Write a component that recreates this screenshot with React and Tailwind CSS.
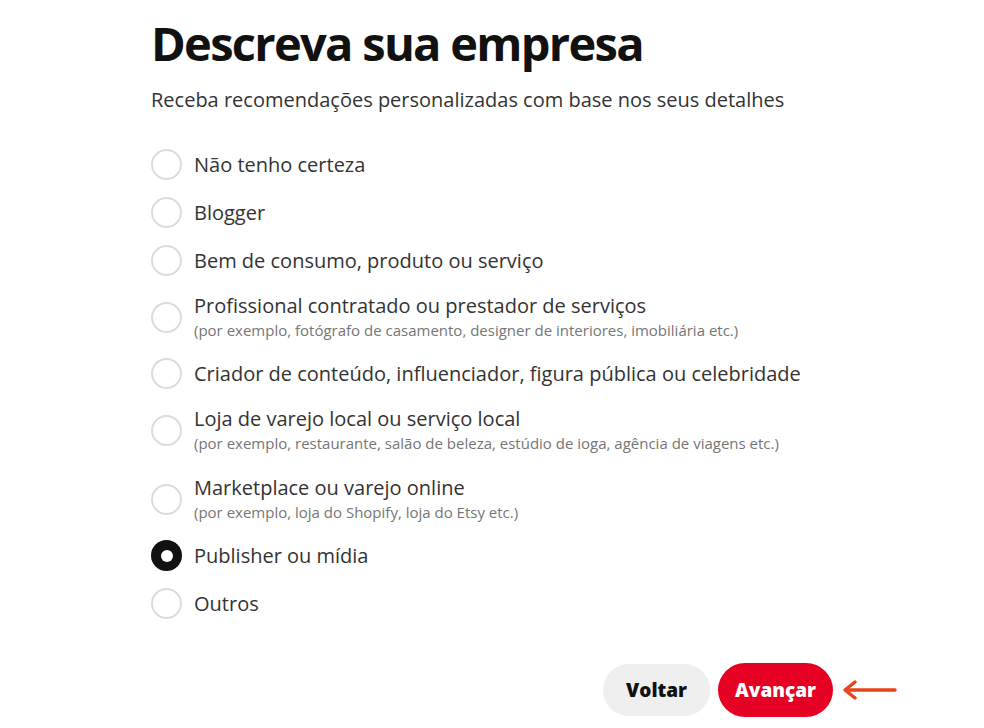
import React from "react";

const options = [
  { label: "Não tenho certeza" },
  { label: "Blogger" },
  { label: "Bem de consumo, produto ou serviço" },
  {
    label: "Profissional contratado ou prestador de serviços",
    hint: "(por exemplo, fotógrafo de casamento, designer de interiores, imobiliária etc.)",
  },
  { label: "Criador de conteúdo, influenciador, figura pública ou celebridade" },
  {
    label: "Loja de varejo local ou serviço local",
    hint: "(por exemplo, restaurante, salão de beleza, estúdio de ioga, agência de viagens etc.)",
  },
  {
    label: "Marketplace ou varejo online",
    hint: "(por exemplo, loja do Shopify, loja do Etsy etc.)",
    spaced: true,
  },
  { label: "Publisher ou mídia", selected: true },
  { label: "Outros" },
];

function Radio({ selected }) {
  return selected ? (
    <span className="flex h-[31px] w-[31px] shrink-0 items-center justify-center rounded-full bg-[#111111]">
      <span className="h-[12px] w-[12px] rounded-full bg-white" />
    </span>
  ) : (
    <span className="h-[31px] w-[31px] shrink-0 rounded-full border-2 border-[#dcdcdc] bg-white" />
  );
}

function Option({ label, hint, selected, spaced }) {
  return (
    <div className={spaced ? "mt-[4px] flex items-center gap-[12px]" : "flex items-center gap-[12px]"}>
      <Radio selected={selected} />
      <div className="flex flex-col">
        <span className="text-[20px] leading-[26px] text-[#333333]">{label}</span>
        {hint && <span className="text-[15px] leading-[22px] text-[#767676]">{hint}</span>}
      </div>
    </div>
  );
}

function ArrowLeft() {
  return (
    <svg width="56" height="24" viewBox="0 0 56 24" fill="none">
      <path d="M54 12H5" stroke="#e8441c" strokeWidth="3.5" strokeLinecap="round" />
      <path d="M14 4L4 12L14 20" stroke="#e8441c" strokeWidth="3.5" strokeLinecap="round" strokeLinejoin="round" />
    </svg>
  );
}

export default function App() {
  return (
    <div
      className="min-h-[728px] w-full bg-white pl-[151px] pr-[87px] pt-[15px]"
      style={{ fontFamily: '"Open Sans", "Noto Sans", sans-serif' }}
    >
      <h1 className="text-[47px] font-bold leading-[56px] tracking-[-1.7px] text-[#111111]">
        Descreva sua empresa
      </h1>
      <p className="mt-[15px] text-[20px] leading-[28px] text-[#333333]">
        Receba recomendações personalizadas com base nos seus detalhes
      </p>
      <div className="mt-[35px] flex flex-col gap-[17px]">
        {options.map((o) => (
          <Option key={o.label} {...o} />
        ))}
      </div>
      <div className="mt-[44px] flex items-center justify-end">
        <button className="h-[52px] rounded-full bg-[#efefef] px-[23px] text-[19px] font-extrabold text-[#111111]">
          Voltar
        </button>
        <button className="ml-[8px] h-[54px] rounded-full bg-[#e60023] px-[17px] text-[19px] font-extrabold text-white">
          Avançar
        </button>
        <span className="ml-[8px] flex">
          <ArrowLeft />
        </span>
      </div>
    </div>
  );
}
